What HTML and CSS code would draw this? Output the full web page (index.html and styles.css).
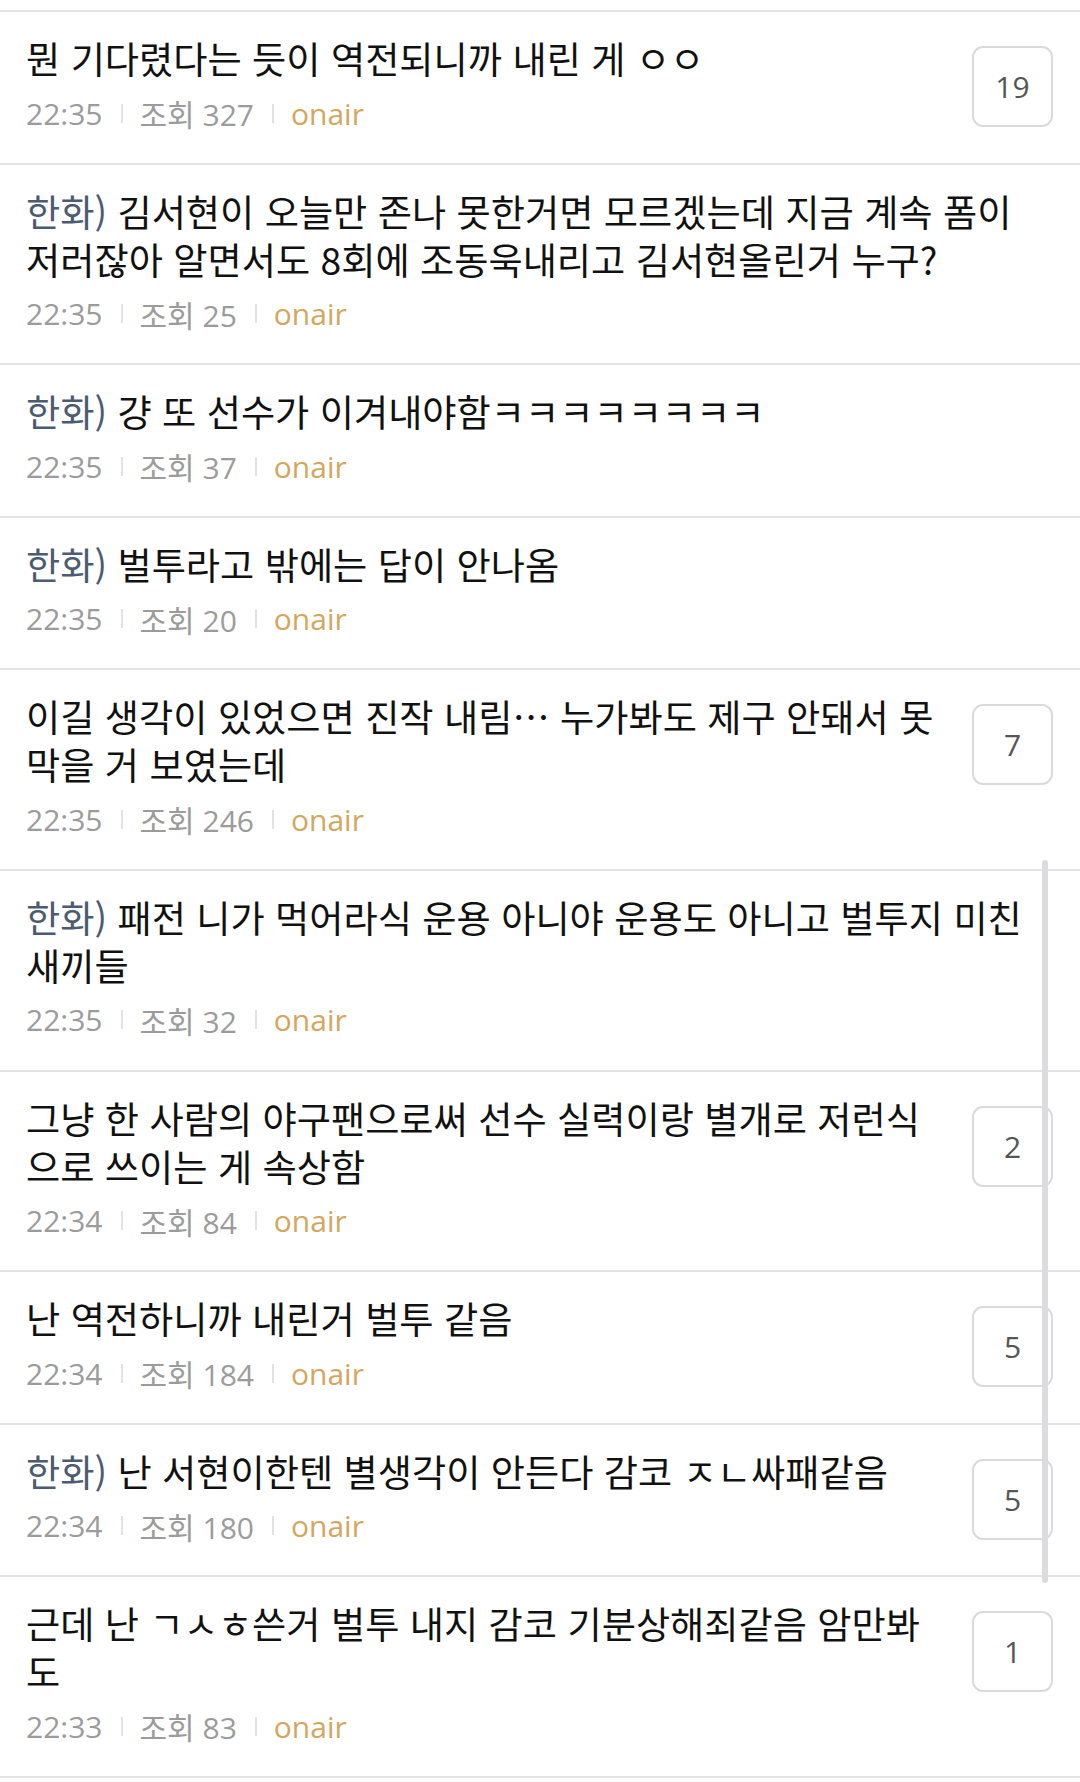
FILE: index.html
```html
<!DOCTYPE html>
<html lang="ko">
<head>
<meta charset="utf-8">
<link rel="stylesheet" href="styles.css">
</head>
<body>
<div class="page">
  <ul class="list">
    <li class="item">
      <div class="body">
        <div class="title">뭔 기다렸다는 듯이 역전되니까 내린 게 ㅇㅇ</div>
        <div class="meta"><span>22:35</span><i class="sep"></i><span>조회 327</span><i class="sep"></i><span class="nick">onair</span></div>
      </div>
      <div class="badge">19</div>
    </li>
    <li class="item">
      <div class="body">
        <div class="title"><span class="tag">한화)</span> 김서현이 오늘만 존나 못한거면 모르겠는데 지금 계속 폼이 저러잖아 알면서도 8회에 조동욱내리고 김서현올린거 누구?</div>
        <div class="meta"><span>22:35</span><i class="sep"></i><span>조회 25</span><i class="sep"></i><span class="nick">onair</span></div>
      </div>
    </li>
    <li class="item">
      <div class="body">
        <div class="title"><span class="tag">한화)</span> 걍 또 선수가 이겨내야함ㅋㅋㅋㅋㅋㅋㅋㅋ</div>
        <div class="meta"><span>22:35</span><i class="sep"></i><span>조회 37</span><i class="sep"></i><span class="nick">onair</span></div>
      </div>
    </li>
    <li class="item">
      <div class="body">
        <div class="title"><span class="tag">한화)</span> 벌투라고 밖에는 답이 안나옴</div>
        <div class="meta"><span>22:35</span><i class="sep"></i><span>조회 20</span><i class="sep"></i><span class="nick">onair</span></div>
      </div>
    </li>
    <li class="item">
      <div class="body">
        <div class="title">이길 생각이 있었으면 진작 내림… 누가봐도 제구 안돼서 못 막을 거 보였는데</div>
        <div class="meta"><span>22:35</span><i class="sep"></i><span>조회 246</span><i class="sep"></i><span class="nick">onair</span></div>
      </div>
      <div class="badge">7</div>
    </li>
    <li class="item">
      <div class="body">
        <div class="title"><span class="tag">한화)</span> 패전 니가 먹어라식 운용 아니야 운용도 아니고 벌투지 미친 새끼들</div>
        <div class="meta"><span>22:35</span><i class="sep"></i><span>조회 32</span><i class="sep"></i><span class="nick">onair</span></div>
      </div>
    </li>
    <li class="item">
      <div class="body">
        <div class="title">그냥 한 사람의 야구팬으로써 선수 실력이랑 별개로 저런식으로 쓰이는 게 속상함</div>
        <div class="meta"><span>22:34</span><i class="sep"></i><span>조회 84</span><i class="sep"></i><span class="nick">onair</span></div>
      </div>
      <div class="badge">2</div>
    </li>
    <li class="item">
      <div class="body">
        <div class="title">난 역전하니까 내린거 벌투 같음</div>
        <div class="meta"><span>22:34</span><i class="sep"></i><span>조회 184</span><i class="sep"></i><span class="nick">onair</span></div>
      </div>
      <div class="badge">5</div>
    </li>
    <li class="item">
      <div class="body">
        <div class="title"><span class="tag">한화)</span> 난 서현이한텐 별생각이 안든다 감코 ㅈㄴ싸패같음</div>
        <div class="meta"><span>22:34</span><i class="sep"></i><span>조회 180</span><i class="sep"></i><span class="nick">onair</span></div>
      </div>
      <div class="badge">5</div>
    </li>
    <li class="item">
      <div class="body">
        <div class="title">근데 난 ㄱㅅㅎ쓴거 벌투 내지 감코 기분상해죄같음 암만봐도</div>
        <div class="meta"><span>22:33</span><i class="sep"></i><span>조회 83</span><i class="sep"></i><span class="nick">onair</span></div>
      </div>
      <div class="badge">1</div>
    </li>
  </ul>
  <div class="scrollbar"></div>
</div>
</body>
</html>
```

FILE: styles.css
```css
* { box-sizing: border-box; }
html, body { margin: 0; padding: 0; background: #fff; }
body { width: 1080px; height: 1782px; overflow: hidden; }
.page { position: relative; padding-top: 10px; }
.list { list-style: none; margin: 0; padding: 0; border-bottom: 2px solid #e3e3e3; }
.item {
  display: flex;
  align-items: flex-start;
  gap: 27px;
  border-top: 2px solid #e3e3e3;
  padding: 22px 27px 31.6px 26px;
}
.body { flex: 1; min-width: 0; }
.title {
  font-family: "Noto Sans CJK KR", "Noto Sans", sans-serif;
  font-size: 37.2px;
  line-height: 48px;
  letter-spacing: 0;
  color: #111;
}
.tag { color: #4b5b72; }
.meta {
  margin-top: 13px;
  display: flex;
  align-items: center;
  height: 36px;
  font-family: "Open Sans", "Noto Sans CJK KR", sans-serif;
  font-size: 30px;
  color: #9b9b9b;
  white-space: nowrap;
}
.sep {
  display: block;
  width: 2px;
  height: 19px;
  background: #e2e2e2;
  margin: 0 17px 0 18px;
}
.nick { color: #d4a65e; }
.badge {
  flex: none;
  margin-top: 12px;
  width: 81px;
  height: 81px;
  border: 2px solid #dadada;
  border-radius: 11px;
  display: flex;
  align-items: center;
  justify-content: center;
  font-family: "Open Sans", sans-serif;
  font-size: 30px;
  color: #555;
}
.scrollbar {
  position: absolute;
  left: 1042px;
  top: 860px;
  width: 6px;
  height: 723px;
  border-radius: 3px;
  background: #dcdcde;
}
```
